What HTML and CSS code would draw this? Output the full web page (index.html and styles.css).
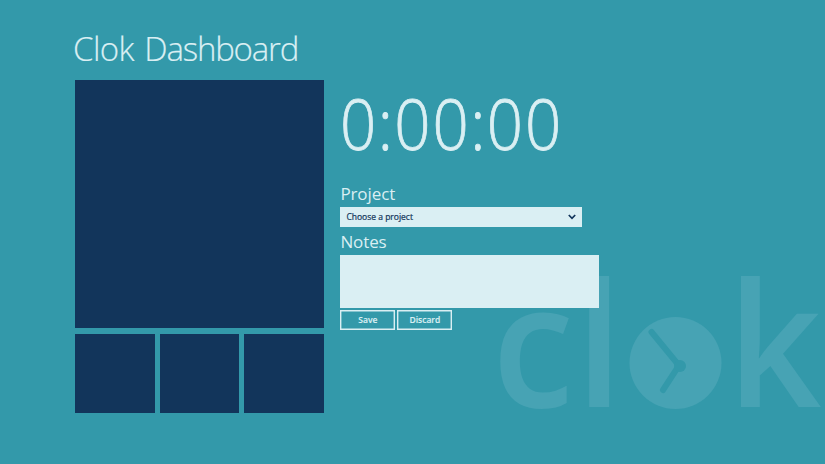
FILE: index.html
```html
<!DOCTYPE html>
<html lang="en">
<head>
<meta charset="utf-8">
<title>Clok Dashboard</title>
<link rel="stylesheet" href="styles.css">
</head>
<body>
<svg class="wordmark" viewBox="490 200 335 264" aria-hidden="true">
  <text x="492" y="407" textLength="82" lengthAdjust="spacingAndGlyphs">c</text>
  <text x="575" y="407">l</text>
  <circle class="face" cx="675.5" cy="363" r="46"/>
  <path class="hands" d="M651.500 332L679 365.500L663 390"/>
  <circle class="hub" cx="680" cy="366" r="6"/>
  <text x="727.500" y="407" textLength="94" lengthAdjust="spacingAndGlyphs">k</text>
</svg>
<h1 class="title">Clok <span class="title-second">Dashboard</span></h1>
<main class="dashboard">
  <section class="tiles">
    <div class="tile tile-large"></div>
    <div class="tile"></div>
    <div class="tile"></div>
    <div class="tile"></div>
  </section>
  <section class="entry">
    <div class="timer">0<span class="colon">:</span>00<span class="colon">:</span>00</div>
    <label class="label">Project</label>
    <div class="select"><span>Choose a project</span>
      <svg class="chevron" viewBox="0 0 8 6"><path d="M0.800 1L4 4.300L7.200 1"/></svg>
    </div>
    <label class="label label-notes">Notes</label>
    <div class="notes"></div>
    <div class="actions">
      <button class="button">Save</button>
      <button class="button">Discard</button>
    </div>
  </section>
</main>
</body>
</html>
```
FILE: styles.css
```css
* { box-sizing: border-box; }
body {
  margin: 0;
  height: 464px;
  padding: 26px 0 0 73px;
  overflow: hidden;
  background: #3399aa;
  color: #daeff3;
  font-family: "Open Sans", "Noto Sans", sans-serif;
}
.title {
  margin: 0;
  height: 54px;
  font-size: 33px;
  line-height: 45px;
  font-weight: 300;
  letter-spacing: -0.6px;
  white-space: nowrap;
  -webkit-text-stroke: 0.2px #daeff3;
}
.title-second { margin-left: 2.5px; letter-spacing: -1.2px; }
.dashboard {
  display: flex;
  gap: 16.4px;
  padding-left: 2px;
}
.tiles {
  display: grid;
  width: 249px;
  height: 333px;
  grid-template-columns: repeat(3, 1fr);
  grid-template-rows: 248.4px 79.400px;
  column-gap: 5px;
  row-gap: 5.2px;
}
.tile { background: #12355b; }
.tile-large { grid-column: 1 / -1; }
.entry { width: 259px; position: relative; }
.timer {
  height: 102px;
  font-size: 70px;
  line-height: 86px;
  font-weight: 300;
  letter-spacing: 2.2px;
  white-space: nowrap;
  transform: scaleX(0.907);
  transform-origin: left;
  -webkit-text-stroke: 0.8px #daeff3;
}
.colon { margin: 0 -0.6px; }
.label {
  display: block;
  height: 25px;
  font-size: 17px;
  line-height: 24px;
  letter-spacing: -0.1px;
}
.label-notes { height: 28.500px; padding-top: 3px; }
.select {
  display: flex;
  align-items: center;
  justify-content: space-between;
  width: 241.500px;
  height: 19.500px;
  padding: 0 6px;
  background: #daeff3;
  color: #12355b;
  font-size: 8.5px;
  -webkit-text-stroke: 0.2px #12355b;
}
.chevron {
  width: 8px;
  height: 6px;
  fill: none;
  stroke: #12355b;
  stroke-width: 1.7;
}
.notes { height: 53px; background: #daeff3; }
.actions { display: flex; gap: 2px; padding-top: 2px; }
.button {
  width: 55px;
  height: 20px;
  padding: 0;
  border: 0;
  box-shadow: inset 0 0 0 1.4px #daeff3;
  background: transparent;
  color: #daeff3;
  font: 600 8.5px/20px "Open Sans", sans-serif;
  -webkit-text-stroke: 0.15px #daeff3;
}
.wordmark {
  position: absolute;
  left: 490px;
  top: 200px;
  width: 335px;
  height: 264px;
  overflow: visible;
  fill: #47a3b4;
  font-family: "Open Sans", sans-serif;
  font-size: 173px;
  font-weight: 600;
}
.hands {
  fill: none;
  stroke: #3399aa;
  stroke-width: 6;
  stroke-linecap: round;
}
.hub { fill: #3399aa; }
```
